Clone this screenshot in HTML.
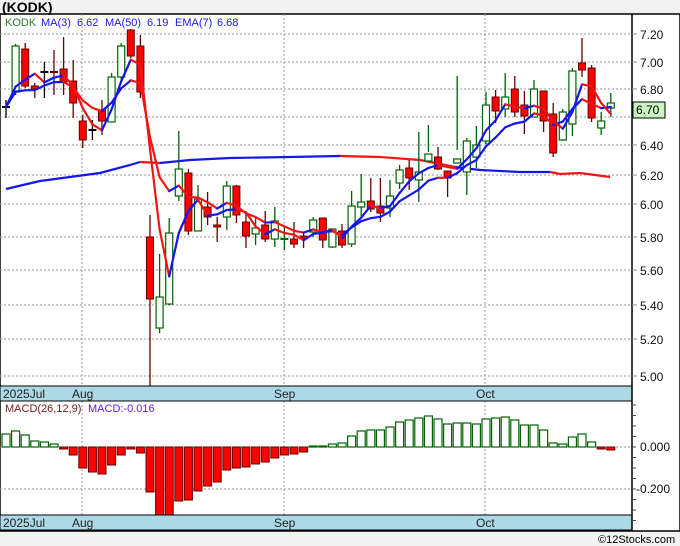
<!DOCTYPE html>
<html><head><meta charset="utf-8"><style>
body{margin:0;width:680px;height:546px;background:#f2f2f2;overflow:hidden;font-family:"Liberation Sans",sans-serif}
svg{position:absolute;left:0;top:0}
</style></head><body>
<svg id="s" width="680" height="546" xmlns="http://www.w3.org/2000/svg">
<rect x="0" y="14" width="680" height="517" fill="#fff" stroke="#000" stroke-width="1.5"/>
<text x="2" y="12" font-size="14" font-weight="bold" fill="#000">(KODK)</text>
<g id="grid" stroke="#999" stroke-width="1" stroke-dasharray="2,2"></g>
<g id="ma50"></g><g id="cand"></g><g id="mas"></g><g id="macd"></g>
<rect x="0" y="386" width="632" height="15" fill="#add8e6" stroke="#000"/>
<rect x="0" y="515" width="632" height="15" fill="#add8e6" stroke="#000"/>
<line x1="632" y1="14" x2="632" y2="531" stroke="#000" stroke-width="1.5"/>
<g font-size="12" fill="#222">
<text x="3" y="398">2025Jul</text><text x="72" y="398">Aug</text><text x="274" y="398">Sep</text><text x="476" y="398">Oct</text>
<text x="3" y="527">2025Jul</text><text x="72" y="527">Aug</text><text x="274" y="527">Sep</text><text x="476" y="527">Oct</text>
</g>
<g font-size="11"><text x="5" y="26" fill="#2a7a2a">KODK</text>
<g fill="#2020ee"><text x="41" y="26">MA(3)</text><text x="77" y="26">6.62</text><text x="105" y="26">MA(50)</text><text x="147" y="26">6.19</text><text x="175" y="26">EMA(7)</text><text x="217" y="26">6.68</text></g>
<text x="5" y="412" fill="#7a1a1a">MACD(26,12,9)</text><text x="88" y="412" fill="#6a1aee">MACD:-0.016</text></g>
<g id="ax" font-size="12" fill="#111"></g>
<rect x="633" y="102" width="32" height="16" fill="#c8f5c0" stroke="#000"/>
<text x="636" y="114" font-size="12" fill="#000">6.70</text>
<text x="598" y="543" font-size="11" fill="#000">©12Stocks.com</text>
</svg>
<script>
var NS="http://www.w3.org/2000/svg";
function el(p,t,a){var e=document.createElementNS(NS,t);for(var k in a)e.setAttribute(k,a[k]);document.getElementById(p).appendChild(e);return e;}
var levels=[[7.20,34],[7.00,62],[6.80,89],[6.60,117],[6.40,145],[6.20,175],[6.00,204],[5.80,237],[5.60,270],[5.40,305],[5.20,339],[5.00,376]];
levels.forEach(function(l){el("grid","line",{x1:0,y1:l[1],x2:632,y2:l[1]});
 el("ax","line",{x1:632,y1:l[1],x2:637,y2:l[1],stroke:"#888"});
 if(l[0]!=6.60){var t=el("ax","text",{x:640,y:l[1]+5});t.textContent=l[0].toFixed(2);}});
[82,284,485].forEach(function(x){el("grid","line",{x1:x,y1:14,x2:x,y2:386});el("grid","line",{x1:x,y1:401,x2:x,y2:515});});
el("grid","line",{x1:0,y1:447,x2:632,y2:447});el("grid","line",{x1:0,y1:489,x2:632,y2:489});
for(var y=405;y<531;y+=10.5)el("ax","line",{x1:632,y1:y,x2:636,y2:y,stroke:"#444"});
var t1=el("ax","text",{x:640,y:451});t1.textContent="0.000";var t2=el("ax","text",{x:636,y:493});t2.textContent="-0.200";
var C=[["x",107,107,100,118],["g",46,92,44,95],["r",49,86,43,88],["r",86,89,83,98],["x",72,72,62,98],["d",72,72,50,95],["r",69,82,37,95],["r",81,103,60,118],["r",121,140,115,148],["x",130,130,120,140],["r",110,121,100,135],["g",77,122,73,122],["g",46,77,43,80],["r",30,56,29,58],["r",46,92,35,98],["r",237,299,215,387],["g",297,328,254,333],["g",233,304,218,305],["g",169,196,131,201],["r",173,231,169,235],["g",199,231,185,231],["r",207,217,192,225],["r",225,227,217,242],["g",186,217,181,230],["r",186,215,185,223],["r",222,236,212,248],["g",228,234,218,245],["r",225,239,211,242],["g",221,239,207,247],["dg",239,239,227,250],["r",239,244,222,248],["r",236,238,232,248],["g",220,232,217,237],["r",218,240,218,248],["g",229,247,229,248],["r",231,245,224,248],["g",206,244,191,247],["g",202,207,174,216],["r",201,209,178,212],["r",206,213,178,222],["g",196,208,180,217],["g",170,183,165,189],["r",168,178,160,190],["g",172,180,132,202],["g",154,161,125,152],["r",157,169,147,170],["r",171,178,172,197],["g",159,163,76,150],["g",141,172,138,195],["g",145,157,126,168],["g",105,141,92,144],["r",97,111,90,123],["g",97,109,73,117],["r",89,112,76,117],["r",105,116,91,134],["g",89,117,80,117],["r",91,121,91,132],["r",114,153,103,157],["g",112,140,109,141],["g",71,124,68,136],["r",63,70,38,77],["r",68,118,65,122],["g",121,128,112,135],["g",103,108,93,117]];
var X=function(i){return 6+9.6*i;};
var closes=[];
C.forEach(function(c,i){var x=X(i),t=c[0];
 var wc=t=="g"||t=="dg"?"#006400":(t=="x"?"#000":"#660000");
 el("cand","line",{x1:x,y1:c[3],x2:x,y2:c[4],stroke:wc,"stroke-width":1.3});
 if(t=="g")el("cand","rect",{x:x-3.5,y:c[1],width:7,height:Math.max(1,c[2]-c[1]),fill:"#fff",stroke:"#006400","stroke-width":1.2});
 else if(t=="r")el("cand","rect",{x:x-3.5,y:c[1],width:7,height:Math.max(2,c[2]-c[1]),fill:"#f00",stroke:"#660000","stroke-width":1});
 else el("cand","line",{x1:x-4,y1:c[1],x2:x+4,y2:c[1],stroke:t=="x"?"#000":(t=="dg"?"#006400":"#660000"),"stroke-width":2});
 closes.push(t=="g"?c[1]:(t=="r"?c[2]:c[1]));});
function drawLine(pts){for(var i=1;i<pts.length;i++){var up=pts[i][1]<pts[i-1][1];
 el("mas","line",{x1:pts[i-1][0],y1:pts[i-1][1],x2:pts[i][0],y2:pts[i][1],stroke:up?"#1515ee":"#f01515","stroke-width":2.2,"stroke-linecap":"round"});}}
var m3=[],e7=[],e=closes[0];
closes.forEach(function(c,i){var a=closes[Math.max(0,i-2)],b=closes[Math.max(0,i-1)];m3.push([X(i),(a+b+c)/3]);
 e=i==0?c:e+(c-e)*0.25;e7.push([X(i),e]);});
drawLine(e7);drawLine(m3);
var M=[[6,189],[40,181],[70,177],[100,173],[130,165],[140,162],[160,163],[190,160],[230,158],[290,157],[340,156],[380,157],[420,160],[455,167],[480,170],[520,172],[550,172],[560,174],[580,173],[610,177]];
for(var i=1;i<M.length;i++){var up=M[i][1]<=M[i-1][1]&&M[i][0]<350||(M[i][0]>460&&M[i][0]<=550);
 el("ma50","line",{x1:M[i-1][0],y1:M[i-1][1],x2:M[i][0],y2:M[i][1],stroke:up?"#1515ee":"#f01515","stroke-width":2.2});}
var H=[434,431,435,441,442,444,448,455,468,472,474,465,455,449,453,492,515,515,501,500,491,486,482,470,468,467,464,462,458,455,454,452,446,446,444,443,436,431,430,430,427,422,420,418,416,419,424,423,423,424,419,418,417,420,425,425,430,443,444,437,434,442,449,450];
H.forEach(function(h,i){var x=X(i);if(h<447)el("macd","rect",{x:x-4,y:h,width:8,height:447-h,fill:"#fff",stroke:"#006400","stroke-width":1.2});
 else el("macd","rect",{x:x-4,y:447,width:8,height:Math.max(2,h-447),fill:"#f00",stroke:"#660000","stroke-width":1});});
</script>
</body></html>
